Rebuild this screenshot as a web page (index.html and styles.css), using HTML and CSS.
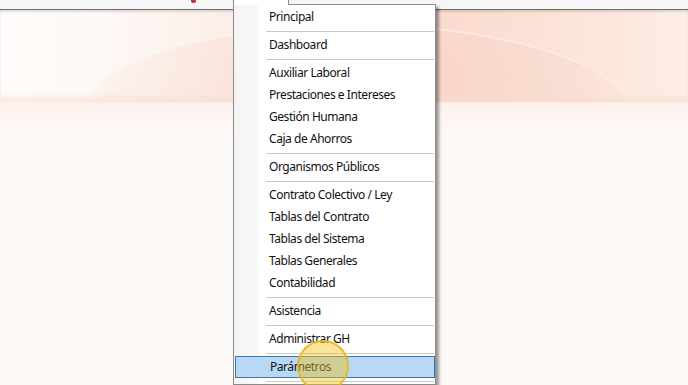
FILE: index.html
```html
<!DOCTYPE html>
<html>
<head>
  <meta charset="utf-8">
  <title>Menú</title>
  <link rel="stylesheet" href="styles.css">
</head>
<body>
  <div class="topbar">
    <span class="top-icon"></span>
  </div>
  <div class="banner">
    <div class="swoosh"></div>
    <div class="band"></div>
  </div>
  <div class="content"></div>

  <div class="menu-tab"></div>
  <ul class="menu">
    <li class="item">Principal</li>
    <li class="sep"></li>
    <li class="item">Dashboard</li>
    <li class="sep"></li>
    <li class="item">Auxiliar Laboral</li>
    <li class="item">Prestaciones e Intereses</li>
    <li class="item">Gestión Humana</li>
    <li class="item">Caja de Ahorros</li>
    <li class="sep"></li>
    <li class="item">Organismos Públicos</li>
    <li class="sep"></li>
    <li class="item">Contrato Colectivo / Ley</li>
    <li class="item">Tablas del Contrato</li>
    <li class="item">Tablas del Sistema</li>
    <li class="item">Tablas Generales</li>
    <li class="item">Contabilidad</li>
    <li class="sep"></li>
    <li class="item">Asistencia</li>
    <li class="sep"></li>
    <li class="item">Administrar GH</li>
    <li class="sep"></li>
    <li class="item active">Parámetros</li>
    <li class="sep"></li>
  </ul>
  <div class="cursor"></div>
</body>
</html>
```

FILE: styles.css
```css
body {
  margin: 0;
  height: 385px;
  overflow: hidden;
  background: #fdf8f6;
  font-family: "Noto Sans", "Open Sans", sans-serif;
  position: relative;
}

.topbar {
  height: 9px;
  background: #f6f6f6;
  border-bottom: 1px solid #6f6f6f;
  position: relative;
}

.top-icon {
  position: absolute;
  left: 191px;
  top: 0;
  width: 5px;
  height: 3px;
  background: #c8283a;
  border-radius: 0 0 2px 2px;
}

.banner {
  height: 93px;
  position: relative;
  overflow: hidden;
  box-shadow: inset 0 2px 2px rgba(0, 0, 0, 0.12);
  background: linear-gradient(to right, #fefcfb 0%, #fdf5f1 22%, #fbe7de 45%, #fadbd0 66%, #fce4d9 84%, #fdeee4 100%);
}

.swoosh {
  position: absolute;
  left: 75px;
  top: 14px;
  width: 560px;
  height: 190px;
  border-radius: 50%;
  border-top: 2px solid rgba(255, 255, 255, 0.45);
  background: radial-gradient(ellipse at 50% 40%, rgba(244, 200, 186, 0.35), rgba(244, 200, 186, 0.15) 60%, rgba(255, 255, 255, 0) 70%);
}

.band {
  position: absolute;
  left: 0;
  right: 0;
  bottom: 0;
  height: 10px;
  background: linear-gradient(to bottom, rgba(247, 220, 208, 0), rgba(247, 220, 208, 0.6) 80%, rgba(252, 238, 232, 0.8));
}

.content {
  height: 282px;
  background: linear-gradient(to bottom, #fdf2ee, #fdf9f7 30px, #fdf9f7);
}

.menu-tab {
  position: absolute;
  left: 233px;
  top: 0;
  width: 54px;
  height: 5px;
  background: #fff;
  border-left: 1px solid #8c8c8c;
  border-right: 1px solid #8c8c8c;
  z-index: 3;
}

.menu {
  position: absolute;
  left: 233px;
  top: 4px;
  width: 201px;
  margin: 0;
  padding: 1px 0 0;
  list-style: none;
  border: 1px solid #8c8c8c;
  background: linear-gradient(to right, #f4f4f4 0, #f9f9f9 24px, #fff 25px);
  box-shadow: 3px 3px 3px rgba(0, 0, 0, 0.4);
  z-index: 2;
}

.item {
  height: 22px;
  line-height: 22px;
  padding-left: 35px;
  font-size: 12px;
  letter-spacing: -0.45px;
  color: #111;
  box-sizing: border-box;
}

.item.active {
  margin: 0 0 0 1px;
  padding-left: 34px;
  line-height: 20px;
  background: #b8d8f6;
  border: 1px solid #3e79a9;
}

.sep {
  height: 6px;
  margin-left: 32px;
  position: relative;
}

.sep::after {
  content: "";
  position: absolute;
  left: 0;
  right: 1px;
  top: 3px;
  border-top: 1px solid #c8c8c8;
}

.cursor {
  position: absolute;
  left: 297px;
  top: 340px;
  width: 48px;
  height: 48px;
  border-radius: 50%;
  background: rgba(240, 196, 30, 0.45);
  border: 2px solid rgba(232, 180, 20, 0.85);
  z-index: 4;
}
```
